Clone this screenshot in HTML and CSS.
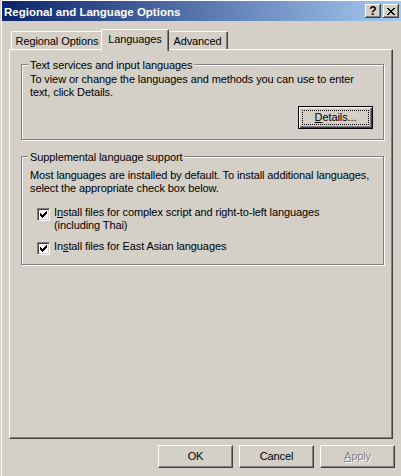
FILE: index.html
```html
<!DOCTYPE html>
<html>
<head>
<meta charset="UTF-8"/>
<title>Regional and Language Options</title>
<link rel="stylesheet" href="styles.css">
</head>
<body>
<div class="frame">
<div class="caption">
<span class="caption-text">Regional and Language Options</span>
<span class="caption-buttons">
<span class="cbtn help">?</span>
<span class="cbtn"><svg width="8" height="7" viewBox="0 0 8 7"><path d="M0 0h2v1H0z M6 0h2v1H6z M1 1h2v1H1z M5 1h2v1H5z M2 2h4v1H2z M3 3h2v1H3z M2 4h4v1H2z M1 5h2v1H1z M5 5h2v1H5z M0 6h2v1H0z M6 6h2v1H6z" fill="#000"/></svg></span>
</span>
</div>

<div class="tabs">
<div class="tab first">Regional Options</div>
<div class="tab selected">Languages</div>
<div class="tab last">Advanced</div>
</div>

<div class="panel">
<div class="group first-group">
<div class="group-title">Text services and input languages</div>
<p class="text first-text">To view or change the languages and methods you can use to enter<br>text, click Details.</p>
<div class="group-actions">
<button class="btn default"><span class="focus"><u>D</u>etails...</span></button>
</div>
</div>

<div class="group second-group">
<div class="group-title">Supplemental language support</div>
<p class="text second-text">Most languages are installed by default. To install additional languages,<br>select the appropriate check box below.</p>
<div class="option option-complex">
<span class="check"><svg width="7" height="7" viewBox="0 0 7 7"><path d="M0 2h1v3H0z M1 3h1v3H1z M2 4h1v3H2z M3 3h1v3H3z M4 2h1v3H4z M5 1h1v3H5z M6 0h1v3H6z" fill="#000"/></svg></span>
<span class="option-label">I<u>n</u>stall files for complex script and right-to-left languages<br>(including Thai)</span>
</div>
<div class="option option-asian">
<span class="check"><svg width="7" height="7" viewBox="0 0 7 7"><path d="M0 2h1v3H0z M1 3h1v3H1z M2 4h1v3H2z M3 3h1v3H3z M4 2h1v3H4z M5 1h1v3H5z M6 0h1v3H6z" fill="#000"/></svg></span>
<span class="option-label">In<u>s</u>tall files for East Asian languages</span>
</div>
</div>
</div>

<div class="buttons">
<button class="btn">OK</button>
<button class="btn">Cancel</button>
<button class="btn disabled"><u>A</u>pply</button>
</div>
</div>
</body>
</html>
```

FILE: styles.css
```css
body {
    margin: 0;
    background: #d4d0c8;
    font-family: "Liberation Sans", Arial, sans-serif;
    font-size: 11px;
    line-height: 13px;
    letter-spacing: -0.1px;
    color: #000;
    overflow: hidden;
}
.frame {
    margin-left: 1px;
    border-left: 1px solid #fff;
    border-top: 1px solid #fff;
    height: 475px;
}

/* title bar */
.caption {
    height: 20px;
    display: flex;
    align-items: center;
    justify-content: space-between;
    padding: 0 2px;
    background: linear-gradient(to right, #0a246a, #a6caf0);
    color: #fff;
    font-weight: bold;
    font-size: 11.5px;
    letter-spacing: 0;
}
.caption-text {
    padding-top: 2px;
}
.caption-buttons {
    display: flex;
    gap: 2px;
}
.cbtn {
    width: 16px;
    height: 14px;
    box-sizing: border-box;
    display: flex;
    align-items: center;
    justify-content: center;
    background: #d4d0c8;
    box-shadow: inset -1px -1px #404040, inset 1px 1px #fff, inset -2px -2px #808080;
    color: #000;
}
.cbtn.help {
    font-size: 12px;
    font-weight: bold;
    line-height: 12px;
}

/* tabs */
.tabs {
    display: flex;
    align-items: flex-end;
    height: 20px;
    margin-top: 8px;
    padding-left: 9px;
}
.tab {
    box-sizing: border-box;
    height: 18px;
    border: 1px solid #fff;
    border-right-color: #404040;
    border-bottom: none;
    border-radius: 2px 2px 0 0;
    box-shadow: inset -1px 0 #808080;
    padding-top: 3px;
    text-align: center;
    background: #d4d0c8;
}
.tab.first {
    width: 92px;
}
.tab.selected {
    width: 68px;
    height: 22px;
    margin: 0 -2px -2px;
    position: relative;
    z-index: 1;
}
.tab.last {
    width: 61px;
}

/* tab page */
.panel {
    box-sizing: border-box;
    margin-left: 7px;
    width: 384px;
    height: 390px;
    border: 1px solid #fff;
    border-right-color: #404040;
    border-bottom-color: #404040;
    box-shadow: inset -1px -1px #808080;
    padding: 14px 8px 0 11px;
}
.group {
    border: 1px solid #808080;
    box-shadow: inset 1px 1px #fff, 1px 1px #fff;
    padding: 0 10px 10px 8px;
}
.second-group {
    margin-top: 16px;
    padding-bottom: 9px;
}
.group-title {
    width: fit-content;
    margin: -6px 0 0 -2px;
    padding: 0 2px;
    background: #d4d0c8;
}
.text {
    margin: 0;
    white-space: nowrap;
}
.first-text {
    margin-top: 1px;
}
.second-text {
    margin-top: 5px;
}
.group-actions {
    display: flex;
    justify-content: flex-end;
    margin-top: 7px;
}
.option {
    display: flex;
    gap: 4px;
    margin-left: 7px;
    white-space: nowrap;
}
.option-complex {
    margin-top: 11px;
}
.option-asian {
    margin-top: 8px;
}
.check {
    box-sizing: border-box;
    flex: none;
    width: 13px;
    height: 13px;
    margin-top: 2px;
    padding: 2px;
    border: 1px solid #808080;
    border-right-color: #fff;
    border-bottom-color: #fff;
    box-shadow: inset 1px 1px #404040, inset -1px -1px #d4d0c8;
    background: #fff;
    display: flex;
}

/* push buttons */
.btn {
    box-sizing: border-box;
    width: 75px;
    height: 23px;
    margin: 0;
    padding: 0;
    border: 1px solid #fff;
    border-right-color: #404040;
    border-bottom-color: #404040;
    box-shadow: inset -1px -1px #808080;
    background: #d4d0c8;
    font: inherit;
    letter-spacing: inherit;
    color: #000;
    display: flex;
    align-items: center;
    justify-content: center;
}
.btn.default {
    border: 1px solid #000;
    box-shadow: inset 1px 1px #fff, inset -1px -1px #404040, inset -2px -2px #808080;
    padding: 3px;
    align-items: stretch;
}
.focus {
    flex: 1;
    border: 1px dotted #000;
    display: flex;
    align-items: center;
    justify-content: center;
}
.btn.disabled {
    color: #808080;
    text-shadow: 1px 1px #fff;
}
.buttons {
    display: flex;
    justify-content: flex-end;
    gap: 6px;
    margin-top: 6px;
    padding-right: 6px;
}
```
